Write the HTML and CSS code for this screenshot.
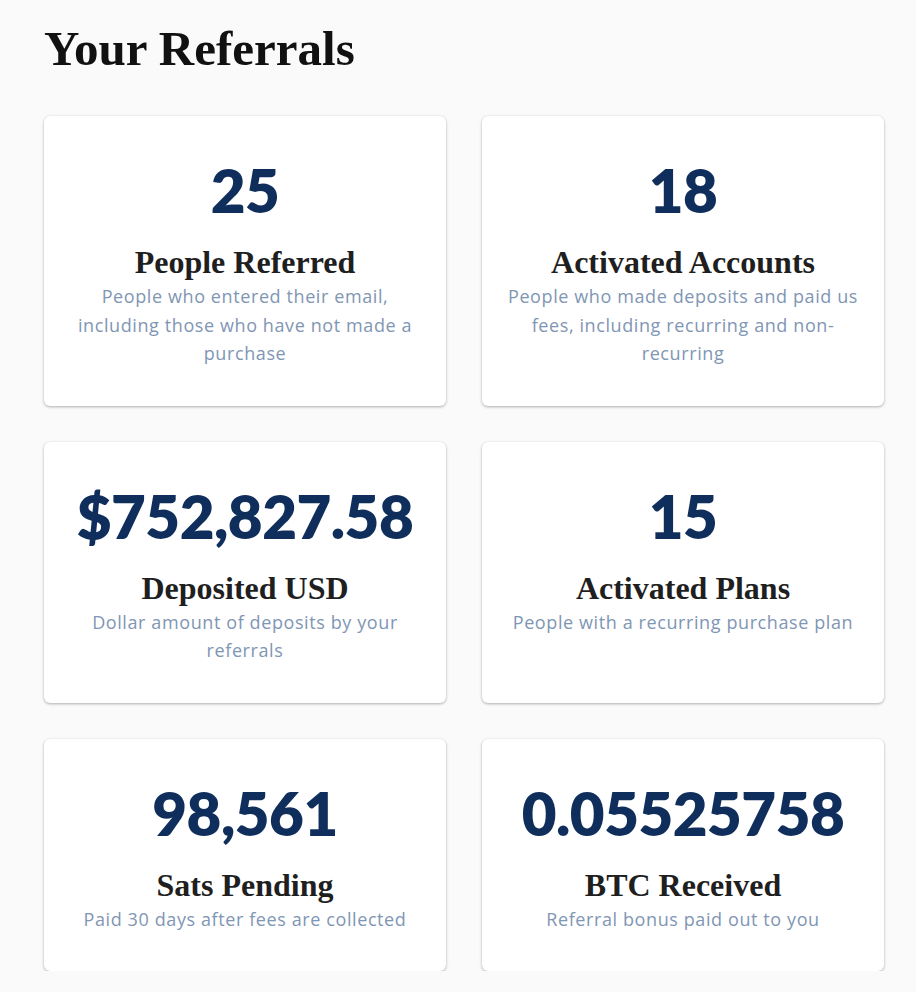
FILE: index.html
```html
<!DOCTYPE html>
<html lang="en">
<head>
<meta charset="utf-8">
<title>Your Referrals</title>
<link rel="stylesheet" href="styles.css">
</head>
<body>
<main class="page">
  <h1 class="page-title">Your Referrals</h1>
  <section class="stats">
    <div class="card">
      <div class="value">25</div>
      <h2 class="label">People Referred</h2>
      <p class="desc">People who entered their email, including those who have not made a purchase</p>
    </div>
    <div class="card">
      <div class="value">18</div>
      <h2 class="label">Activated Accounts</h2>
      <p class="desc">People who made deposits and paid us fees, including recurring and non-recurring</p>
    </div>
    <div class="card">
      <div class="value">$752,827.58</div>
      <h2 class="label">Deposited USD</h2>
      <p class="desc">Dollar amount of deposits by your referrals</p>
    </div>
    <div class="card">
      <div class="value">15</div>
      <h2 class="label">Activated Plans</h2>
      <p class="desc">People with a recurring purchase plan</p>
    </div>
    <div class="card">
      <div class="value">98,561</div>
      <h2 class="label">Sats Pending</h2>
      <p class="desc">Paid 30 days after fees are collected</p>
    </div>
    <div class="card">
      <div class="value">0.05525758</div>
      <h2 class="label">BTC Received</h2>
      <p class="desc">Referral bonus paid out to you</p>
    </div>
  </section>
</main>
</body>
</html>
```

FILE: styles.css
```css
* { box-sizing: border-box; }
html, body { margin: 0; padding: 0; background: #fafafa; }
body { font-family: "Open Sans", "Liberation Sans", sans-serif; }
.page { padding: 20px 32px 0 44px; }
.page-title {
  margin: 0 0 38px 0;
  font-family: "Liberation Serif", "DejaVu Serif", serif;
  font-weight: 700;
  font-size: 49px;
  line-height: 58px;
  color: #111;
}
.stats {
  display: grid;
  grid-template-columns: 402px 402px;
  column-gap: 36px;
  row-gap: 36px;
}
.card {
  background: #fff;
  border-radius: 6px;
  box-shadow: 0 1px 3px rgba(0,0,0,0.3), 0 0 1px rgba(0,0,0,0.06);
  padding: 38px 22px 38px;
  display: flex;
  flex-direction: column;
  align-items: center;
  text-align: center;
}
.value {
  font-family: "Lato", sans-serif;
  font-weight: 800;
  font-size: 60px;
  line-height: 72px;
  color: #0f2e5b;
  letter-spacing: -0.5px;
}
.label {
  margin: 18px 0 0 0;
  font-family: "Liberation Serif", "DejaVu Serif", serif;
  font-weight: 700;
  font-size: 32px;
  line-height: 36px;
  color: #1f1f1f;
}
.desc {
  margin: 2px 0 0 0;
  font-family: "Open Sans", sans-serif;
  font-size: 18px;
  line-height: 28.5px;
  letter-spacing: 0.6px;
  color: #7f96b4;
}
```
